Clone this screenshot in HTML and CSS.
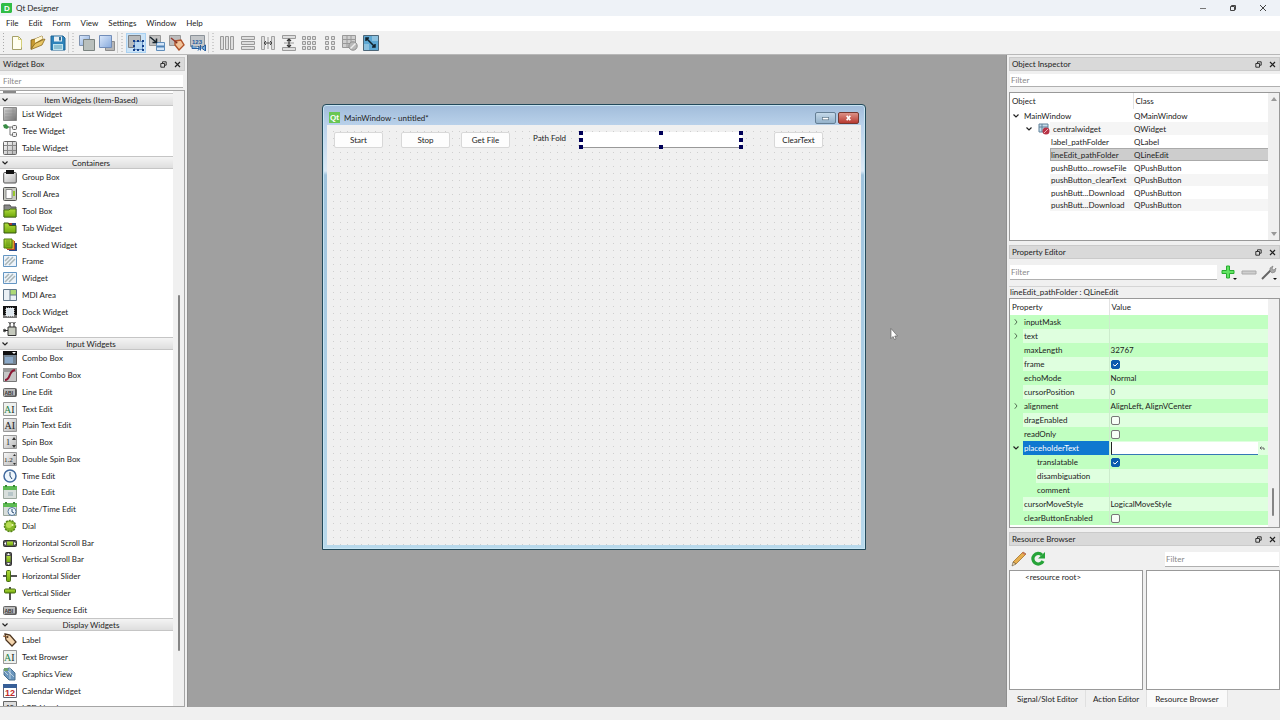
FILE: index.html
```html
<!DOCTYPE html>
<html lang="en">
<head>
<meta charset="utf-8">
<title>Qt Designer</title>
<link rel="stylesheet" href="styles.css">
</head>
<body>
<svg class="paints" aria-hidden="true">
  <defs>
    <linearGradient id="grey" x1="0" y1="0" x2="1" y2="1"><stop offset="0" stop-color="#fafafa"/><stop offset="1" stop-color="#b4b4b4"/></linearGradient>
    <linearGradient id="darkgrey" x1="0" y1="0" x2="1" y2="1"><stop offset="0" stop-color="#d8d8d8"/><stop offset="1" stop-color="#707070"/></linearGradient>
    <linearGradient id="blue" x1="0" y1="0" x2="1" y2="1"><stop offset="0" stop-color="#dce9fb"/><stop offset="1" stop-color="#86a9dc"/></linearGradient>
    <linearGradient id="lime" x1="0" y1="0" x2="0" y2="1"><stop offset="0" stop-color="#b2dc3c"/><stop offset="1" stop-color="#6fa80c"/></linearGradient>
  </defs>
</svg>
<svg class="sprite" aria-hidden="true">
  <symbol id="i-float" viewBox="0 0 7 7"><path d="M2.500 2V.8h3.700v3.400H5M.8 2.500h3.700v3.700H.8z" fill="none" stroke="#222" stroke-width=".9"/></symbol>
  <symbol id="i-close" viewBox="0 0 7 7"><path d="M1 1l5 5M6 1L1 6" stroke="#222" stroke-width="1.200"/></symbol>
  <symbol id="i-down" viewBox="0 0 8 8"><path d="M1.500 2.500L4 5l2.500-2.500" fill="none" stroke="#222" stroke-width="1.200"/></symbol>
  <symbol id="i-right" viewBox="0 0 8 8"><path d="M2.800 1.300L5 4 2.800 6.700" fill="none" stroke="#557055"/></symbol>

  <symbol id="i-new" viewBox="0 0 16 16"><path d="M3.500 1.500h6l3 3v10h-9z" fill="#fffef0" stroke="#a5a06a"/><path d="M9.500 1.500v3h3v8" fill="none" stroke="#d4cf78"/></symbol>
  <symbol id="i-open" viewBox="0 0 16 16"><path d="M1 14V5l4-1 7-3 1 3-8 5z" fill="#c79a31" stroke="#7a5b12" stroke-width=".8"/><path d="M5 4l7-3 .8 2.500L5 8z" fill="#fff6cf"/><path d="M1 14.500l4-6L15 4l-3 6z" fill="#e8c565" stroke="#8b6a1b" stroke-width=".8"/></symbol>
  <symbol id="i-save" viewBox="0 0 16 16"><path d="M1 1h12l2 2v12H1z" fill="#2e83ba" stroke="#1f6595"/><path d="M4 1.500h8v5H4z" fill="#e7eef2"/><path d="M9 2h2v3.500H9z" fill="#2e6c95"/><path d="M3 9h10v6H3z" fill="#bfe3ee"/><path d="M4 11h8M4 13h8" stroke="#5b9db8"/></symbol>
  <symbol id="i-lower" viewBox="0 0 16 16"><path d="M.5.500h10v10H.5z" fill="url(#blue)" stroke="#7f93b0"/><path d="M4.500 4.500h11v11h-11z" fill="#b9bfbc" stroke="#7b8380"/></symbol>
  <symbol id="i-raise" viewBox="0 0 16 16"><path d="M6.500 6.500h9v9h-9z" fill="#b5b5b5" stroke="#8c8c8c"/><path d="M.5.500h12v12H.5z" fill="url(#blue)" stroke="#718db9"/></symbol>
  <symbol id="i-editw" viewBox="0 0 16 16"><path d="M.5.500h12v12H.5z" fill="#b8babb" stroke="#7d8185"/><path d="M6.500 6.500h8v8h-8z" fill="#b6d6f2" stroke="#6c94c4"/><path d="M5 5h2v2H5zm4 0h2v2H9zm5 0h2v2h-2zM5 10h2v2H5zm9 0h2v2h-2zM5 14h2v2H5zm4 0h2v2H9zm5 0h2v2h-2z" fill="#143f8b"/></symbol>
  <symbol id="i-signals" viewBox="0 0 16 16"><path d="M.5.500h11v10H.5z" fill="#c1c1c1" stroke="#989898"/><path d="M7.500 7.500h8v8h-8z" fill="#d3e5f8" stroke="#5f8dbb"/><path d="M8 11.500h7" stroke="#4d80b5" stroke-width="2"/><path d="M1 2l6 5M7.500 3.500v4h-4" stroke="#18252e" stroke-width="1.500" fill="none"/></symbol>
  <symbol id="i-buddy" viewBox="0 0 16 16"><path d="M.5.500h11v10H.5z" fill="#bdbdbd" stroke="#999"/><path d="M6 6l6-1 3 5-5 5-4-5z" fill="#f1c39a" stroke="#b0532a" stroke-width="1.400"/><path d="M2 3l5 4" stroke="#94382c" stroke-width="1.500"/><circle cx="7.500" cy="7.500" r="1" fill="#7b2e1f"/></symbol>
  <symbol id="i-taborder" viewBox="0 0 16 16"><path d="M.5.500h14v11H.5z" fill="#c3c6c9" stroke="#8b9299"/><text x="2" y="9" font-size="6" class="glyph blue-glyph">123</text><path d="M2 10v3.500h7M8 11l2 2.500-2 2M10.500 10v5.500M15.500 10l-4 3 4 3z" fill="#77abd7" stroke="#245c9e"/></symbol>
  <symbol id="i-hlay" viewBox="0 0 16 16"><path d="M1.500 1.500v13h3v-13zM6.500 1.500v13h3v-13zM11.500 1.500v13h3v-13z" fill="#dedede" stroke="#9a9a9a"/></symbol>
  <symbol id="i-vlay" viewBox="0 0 16 16"><path d="M1.500 1.500h13v3h-13zM1.500 6.500h13v3h-13zM1.500 11.500h13v3h-13z" fill="#dedede" stroke="#9a9a9a"/></symbol>
  <symbol id="i-hsplit" viewBox="0 0 16 16"><path d="M1.500 1.500v13h3v-13zM11.500 1.500v13h3v-13z" fill="#dedede" stroke="#a2a2a2"/><path d="M8 2v12" stroke="#999"/><path d="M4 8h8M6 6L4 8l2 2M10 6l2 2-2 2" fill="none" stroke="#444"/></symbol>
  <symbol id="i-vsplit" viewBox="0 0 16 16"><path d="M1.500 .5h13v3h-13zM1.500 12.500h13v3h-13z" fill="#dedede" stroke="#9a9a9a"/><path d="M3 8h10" stroke="#999"/><path d="M8 4v8M6 6l2-2 2 2M6 10l2 2 2-2" fill="none" stroke="#333" stroke-width="1.200"/></symbol>
  <symbol id="i-grid" viewBox="0 0 16 16"><path d="M1.500 1.500h3v3h-3zM6.500 1.500h3v3h-3zM11.500 1.500h3v3h-3zM1.500 6.500h3v3h-3zM6.500 6.500h3v3h-3zM11.500 6.500h3v3h-3zM1.500 11.500h3v3h-3zM6.500 11.500h3v3h-3zM11.500 11.500h3v3h-3z" fill="#dedede" stroke="#9a9a9a"/></symbol>
  <symbol id="i-formlay" viewBox="0 0 16 16"><path d="M3.500 1.500h3v3h-3zM9.500 1.500h3v3h-3zM3.500 6.500h3v3h-3zM9.500 6.500h3v3h-3zM3.500 11.500h3v3h-3zM9.500 11.500h3v3h-3z" fill="#dedede" stroke="#9a9a9a"/></symbol>
  <symbol id="i-break" viewBox="0 0 16 16"><path d="M.5.500h13v4H.5zM.5 4.500h13v4H.5zM.5 8.500h13v4H.5zM5 .5v12M9 .5v12" fill="#cfcfcf" stroke="#999"/><circle cx="11" cy="11" r="4.200" fill="#b9b9b9" stroke="#8d8d8d"/><path d="M8.500 13.500l5-5" stroke="#eee" stroke-width="1.400"/></symbol>
  <symbol id="i-adjust" viewBox="0 0 16 16"><path d="M.5.500h15v15H.5z" fill="#5da7d2" stroke="#4c6678"/><path d="M9 1h6v5H9zM1 9h5v6H1z" fill="#8cc1df"/><path d="M3 3l9 9M3 6V3h3M12 9v3H9" stroke="#12222d" stroke-width="1.500" fill="none"/></symbol>

  <symbol id="w-list" viewBox="0 0 14 14"><path d="M.5.500h13v13H.5z" fill="url(#darkgrey)" stroke="#888"/><path d="M2 4h10M2 7h10M2 10h10M10 1v12" stroke="#8a8a8a" stroke-width=".5"/></symbol>
  <symbol id="w-tree" viewBox="0 0 14 14"><path d="M4 3h5M7 3v8h3" stroke="#777" fill="none"/><path d="M0 1l3-1 3 3-2 2-3-1z" fill="#398c45"/><rect x="9.500" y="1.500" width="4" height="4" rx="1" fill="#eee" stroke="#666"/><rect x="9.500" y="8.500" width="4" height="4" rx="1" fill="#eee" stroke="#666"/></symbol>
  <symbol id="w-table" viewBox="0 0 14 14"><rect x=".5" y=".5" width="13" height="13" rx="1" fill="url(#grey)" stroke="#666"/><path d="M4.500 1v12M9.500 1v12M1 4.500h12M1 9.500h12" stroke="#888"/></symbol>
  <symbol id="w-group" viewBox="0 0 14 14"><rect x=".7" y="2.500" width="12.600" height="10.500" rx="1" fill="url(#grey)" stroke="#555"/><path d="M3 0h8v4H3z" fill="#111"/></symbol>
  <symbol id="w-scroll" viewBox="0 0 14 14"><rect x=".5" y=".5" width="13" height="13" rx="1" fill="#c8cac2" stroke="#555"/><path d="M3 2.500h6v9H3z" fill="#fff" stroke="#888"/><path d="M11 4v5" stroke="#98c72f" stroke-width="2"/></symbol>
  <symbol id="w-tool" viewBox="0 0 14 14"><path d="M1 1h6l1 2h5v10H1z" fill="#888" stroke="#555"/><path d="M1 6h5l1-1h6v8H1z" fill="url(#lime)" stroke="#4d7812"/></symbol>
  <symbol id="w-tab" viewBox="0 0 14 14"><path d="M5 2h4v4H5z" fill="#aa382c"/><path d="M9 2h4v4H9z" fill="#294a8a"/><path d="M1 2h4.500l1 2.500H13V12H1z" fill="url(#lime)" stroke="#355610"/></symbol>
  <symbol id="w-stack" viewBox="0 0 14 14"><path d="M6 5h8v8H6z" fill="#25498c"/><path d="M4 3h8v9H4z" fill="#b2422d"/><path d="M3 2h8v9H3z" fill="#d6a52b"/><path d="M1 1h8v9H1z" fill="url(#lime)" stroke="#4e7812"/><path d="M3 3h4M3 5h4M3 7h4" stroke="#557a1c" stroke-width=".6"/></symbol>
  <symbol id="w-frame" viewBox="0 0 14 14"><path d="M.5 1.500h13v11H.5z" fill="#edf3fa" stroke="#6496c3"/><path d="M2 11l8-8M6 11l6-6M2 7l4-4" stroke="#a8b5b6" stroke-width="1.500"/></symbol>
  <symbol id="w-mdi" viewBox="0 0 14 14"><path d="M.5 1.500h13v11H.5z" fill="#eaf0f5" stroke="#61768a"/><path d="M7 2h6v5H7z" fill="#add977"/><path d="M7 2v10M7 7h6" stroke="#61768a"/></symbol>
  <symbol id="w-dock" viewBox="0 0 14 14"><path d="M0 1h14v12H0z" fill="#111"/><path d="M0 10h14v3H0z" fill="#777"/><path d="M3 3h8v8H3z" fill="#dfe8ef" stroke="#fff" stroke-dasharray="1 1"/></symbol>
  <symbol id="w-qax" viewBox="0 0 14 14"><path d="M5 5h8v8.500H5z" fill="#c5c9bd" stroke="#333"/><path d="M1 8.500h4M7 5V1M11 5V1" stroke="#222"/><circle cx="1.500" cy="8.500" r="1.200" fill="none" stroke="#222"/><path d="M5.500 0l1.500 1.500L8.500 0M9.500 0L11 1.500 12.500 0" stroke="#222" fill="none"/></symbol>
  <symbol id="w-combo" viewBox="0 0 14 14"><path d="M.5.500h13v13H.5z" fill="#748594" stroke="#555"/><path d="M0 0h14v4H0z" fill="#111"/><path d="M9 1h4l-2 2z" fill="#fff"/><path d="M2 6h8v6H2z" fill="#8ba9c8"/></symbol>
  <symbol id="w-font" viewBox="0 0 14 14"><path d="M.5.500h13v13H.5z" fill="#c6c6c6" stroke="#777"/><path d="M0 0h14v4H0z" fill="#999"/><path d="M2 12c6 0 3-9 10-10" stroke="#8c1734" stroke-width="2" fill="none"/></symbol>
  <symbol id="w-line" viewBox="0 0 14 14"><rect x=".5" y="3.500" width="13" height="8" rx="1" fill="#bbb" stroke="#666"/><path d="M12.500 4v7M2 11h11" stroke="#555"/><text x="1.500" y="9.500" font-size="5" class="glyph">ABI</text></symbol>
  <symbol id="w-text" viewBox="0 0 14 14"><path d="M.5.500h13v13H.5z" fill="#eef1ee" stroke="#999"/><text x="1" y="11" font-size="10" class="serif"><tspan class="green-glyph">A</tspan>I</text></symbol>
  <symbol id="w-plain" viewBox="0 0 14 14"><path d="M.5.500h13v13H.5z" fill="url(#grey)" stroke="#999"/><text x="1.500" y="11" font-size="10" class="serif">AI</text></symbol>
  <symbol id="w-spin" viewBox="0 0 14 14"><path d="M.5.500h13v13H.5z" fill="url(#grey)" stroke="#999"/><text x="3" y="10" font-size="8" class="serif">1</text><path d="M9 5h4l-2-3zM9 10h4l-2 3z" fill="#333"/></symbol>
  <symbol id="w-dspin" viewBox="0 0 14 14"><path d="M.5.500h13v13H.5z" fill="url(#grey)" stroke="#999"/><text x="1" y="10" font-size="7" class="serif">1.2</text><path d="M10 4h3l-1.500-2zM10 11h3l-1.500 2z" fill="#333"/></symbol>
  <symbol id="w-time" viewBox="0 0 14 14"><circle cx="7" cy="7" r="6" fill="#edf5fc" stroke="#40699e" stroke-width="1.500"/><path d="M7 3v4l2 3" fill="none" stroke="#28496f"/></symbol>
  <symbol id="w-date" viewBox="0 0 14 14"><path d="M.5 1.500h13v12H.5z" fill="#d8dedb" stroke="#9aa69c"/><path d="M0 1h14v4H0z" fill="#5dbb52"/><path d="M3 0v2M11 0v2" stroke="#3b8a36" stroke-width="2"/><path d="M5 7h5v4H5z" fill="#b7c6c9"/></symbol>
  <symbol id="w-datetime" viewBox="0 0 14 14"><path d="M.5 1.500h13v12H.5z" fill="#d8dedb" stroke="#9aa69c"/><path d="M0 1h14v4H0z" fill="#5dbb52"/><path d="M3 0v2M11 0v2" stroke="#3b8a36" stroke-width="2"/><circle cx="9" cy="9.500" r="4" fill="#edf5fc" stroke="#55799f"/><path d="M9 7v3l2 1" stroke="#28496f" fill="none"/></symbol>
  <symbol id="w-dial" viewBox="0 0 14 14"><circle cx="7" cy="7" r="5.500" fill="#86b927" stroke="#56831a" stroke-width="1.500" stroke-dasharray="2 1"/><circle cx="6" cy="6" r="3" fill="#b8dd55"/><circle cx="9.500" cy="6" r="1" fill="#eef7b5"/></symbol>
  <symbol id="w-hsb" viewBox="0 0 14 14"><rect x=".5" y="4.500" width="13" height="6" rx="1" fill="#555" stroke="#333"/><path d="M4 5.500h6v4H4z" fill="url(#lime)"/><path d="M3 6v3L1 7.500zM11 6v3l2-1.500z" fill="#fff"/></symbol>
  <symbol id="w-vsb" viewBox="0 0 14 14"><rect x="2.500" y=".5" width="6" height="13" rx="1" fill="#555" stroke="#333"/><path d="M3.500 4h4v6h-4z" fill="url(#lime)"/><path d="M4 3h3L5.500 1zM4 11h3l-1.500 2z" fill="#fff"/></symbol>
  <symbol id="w-hsl" viewBox="0 0 14 14"><path d="M0 7h14" stroke="#555" stroke-width="2"/><rect x="3.500" y="1.500" width="4" height="11" rx="1" fill="url(#lime)" stroke="#466a13"/></symbol>
  <symbol id="w-vsl" viewBox="0 0 14 14"><path d="M7 1v13" stroke="#555" stroke-width="2"/><rect x="1.500" y="3" width="11" height="4" rx="1" fill="url(#lime)" stroke="#466a13"/></symbol>
  <symbol id="w-label" viewBox="0 0 14 14"><path d="M2 1l5 1 6 7-4 4-6-6z" fill="#f4d5ad" stroke="#4b3420" stroke-width="1.300"/><circle cx="4.500" cy="4" r="1" fill="#4b3420"/><path d="M0 3l4 1" stroke="#8b5525"/></symbol>
  <symbol id="w-graph" viewBox="0 0 14 14"><path d="M1 2l6-1 5 5v7H6L1 8z" fill="#6a95bd" stroke="#49708f"/><path d="M1 4l4 4M3 2l8 8M7 1v11" stroke="#dbe9ed" stroke-width=".7"/><path d="M1 1h4v3H1z" fill="#70a06b"/></symbol>
  <symbol id="w-cal" viewBox="0 0 14 14"><path d="M.5.500h13v13H.5z" fill="#fff" stroke="#667"/><path d="M0 0h14v4H0z" fill="#375f98"/><text x="2" y="12" font-size="9" class="glyph red-glyph">12</text></symbol>
  <symbol id="w-lcd" viewBox="0 0 14 14"><path d="M.5.500h13v13H.5z" fill="#ddd" stroke="#666"/><text x="2" y="9" font-size="8" class="glyph">42</text></symbol>
</svg>

<header class="titlebar">
  <svg class="app-logo" viewBox="0 0 11 10"><path d="M1 0h10v9l-1 1H0V1z" fill="#31bd46"/><text x="3" y="8" font-size="8" class="glyph white-glyph">D</text></svg>
  <span class="app-title">Qt Designer</span>
  <div class="caption-buttons">
    <button aria-label="Minimize"><svg viewBox="0 0 8 8"><path d="M1 4.500h6" stroke="#777"/></svg></button>
    <button aria-label="Restore"><svg viewBox="0 0 8 8"><path d="M2.500 2.500v-1h4v4h-1M1.500 2.500h4v4h-4z" fill="none" stroke="#444"/></svg></button>
    <button aria-label="Close"><svg viewBox="0 0 8 8"><path d="M1 1l6 6M7 1L1 7" stroke="#444"/></svg></button>
  </div>
</header>
<nav class="menubar">
  <button>File</button><button>Edit</button><button>Form</button><button>View</button><button>Settings</button><button>Window</button><button>Help</button>
</nav>
<div class="toolbar" role="toolbar">
  <span class="grip grip-first"></span>
  <div class="tools tools-file">
    <button aria-label="New"><svg><use href="#i-new"/></svg></button>
    <button aria-label="Open"><svg><use href="#i-open"/></svg></button>
    <button aria-label="Save"><svg><use href="#i-save"/></svg></button>
  </div>
  <span class="grip"></span>
  <div class="tools tools-order">
    <button aria-label="Send to back"><svg><use href="#i-lower"/></svg></button>
    <button aria-label="Bring to front"><svg><use href="#i-raise"/></svg></button>
  </div>
  <span class="grip"></span>
  <div class="tools tools-mode">
    <button class="active" aria-label="Edit widgets"><svg><use href="#i-editw"/></svg></button>
    <button aria-label="Edit signals/slots"><svg><use href="#i-signals"/></svg></button>
    <button aria-label="Edit buddies"><svg><use href="#i-buddy"/></svg></button>
    <button aria-label="Edit tab order"><svg><use href="#i-taborder"/></svg></button>
  </div>
  <span class="grip"></span>
  <div class="tools tools-layout">
    <button aria-label="Lay out horizontally"><svg><use href="#i-hlay"/></svg></button>
    <button aria-label="Lay out vertically"><svg><use href="#i-vlay"/></svg></button>
    <button aria-label="Horizontal splitter"><svg><use href="#i-hsplit"/></svg></button>
    <button aria-label="Vertical splitter"><svg><use href="#i-vsplit"/></svg></button>
    <button aria-label="Grid layout"><svg><use href="#i-grid"/></svg></button>
    <button aria-label="Form layout"><svg><use href="#i-formlay"/></svg></button>
    <button aria-label="Break layout"><svg><use href="#i-break"/></svg></button>
    <button aria-label="Adjust size"><svg><use href="#i-adjust"/></svg></button>
  </div>
</div>

<main class="workspace">
  <aside class="left-dock">
    <div class="dock-title"><span>Widget Box</span><button aria-label="Float"><svg><use href="#i-float"/></svg></button><button aria-label="Close"><svg><use href="#i-close"/></svg></button></div>
    <input class="filter" type="text" placeholder="Filter" aria-label="Filter widgets">
    <div class="widget-view">
      <div class="widget-list">
        <div class="clipped-row"><i></i></div>
        <h2 class="category"><svg><use href="#i-down"/></svg><span>Item Widgets (Item-Based)</span></h2>
        <ul class="items items-views">
          <li><svg><use href="#w-list"/></svg>List Widget</li>
          <li><svg><use href="#w-tree"/></svg>Tree Widget</li>
          <li><svg><use href="#w-table"/></svg>Table Widget</li>
        </ul>
        <h2 class="category"><svg><use href="#i-down"/></svg><span>Containers</span></h2>
        <ul class="items items-containers">
          <li><svg><use href="#w-group"/></svg>Group Box</li>
          <li><svg><use href="#w-scroll"/></svg>Scroll Area</li>
          <li><svg><use href="#w-tool"/></svg>Tool Box</li>
          <li><svg><use href="#w-tab"/></svg>Tab Widget</li>
          <li><svg><use href="#w-stack"/></svg>Stacked Widget</li>
          <li><svg><use href="#w-frame"/></svg>Frame</li>
          <li><svg><use href="#w-frame"/></svg>Widget</li>
          <li><svg><use href="#w-mdi"/></svg>MDI Area</li>
          <li><svg><use href="#w-dock"/></svg>Dock Widget</li>
          <li><svg><use href="#w-qax"/></svg>QAxWidget</li>
        </ul>
        <h2 class="category"><svg><use href="#i-down"/></svg><span>Input Widgets</span></h2>
        <ul class="items items-inputs">
          <li><svg><use href="#w-combo"/></svg>Combo Box</li>
          <li><svg><use href="#w-font"/></svg>Font Combo Box</li>
          <li><svg><use href="#w-line"/></svg>Line Edit</li>
          <li><svg><use href="#w-text"/></svg>Text Edit</li>
          <li><svg><use href="#w-plain"/></svg>Plain Text Edit</li>
          <li><svg><use href="#w-spin"/></svg>Spin Box</li>
          <li><svg><use href="#w-dspin"/></svg>Double Spin Box</li>
          <li><svg><use href="#w-time"/></svg>Time Edit</li>
          <li><svg><use href="#w-date"/></svg>Date Edit</li>
          <li><svg><use href="#w-datetime"/></svg>Date/Time Edit</li>
          <li><svg><use href="#w-dial"/></svg>Dial</li>
          <li><svg><use href="#w-hsb"/></svg>Horizontal Scroll Bar</li>
          <li><svg><use href="#w-vsb"/></svg>Vertical Scroll Bar</li>
          <li><svg><use href="#w-hsl"/></svg>Horizontal Slider</li>
          <li><svg><use href="#w-vsl"/></svg>Vertical Slider</li>
          <li><svg><use href="#w-line"/></svg>Key Sequence Edit</li>
        </ul>
        <h2 class="category"><svg><use href="#i-down"/></svg><span>Display Widgets</span></h2>
        <ul class="items">
          <li><svg><use href="#w-label"/></svg>Label</li>
          <li><svg><use href="#w-text"/></svg>Text Browser</li>
          <li><svg><use href="#w-graph"/></svg>Graphics View</li>
          <li><svg><use href="#w-cal"/></svg>Calendar Widget</li>
          <li><svg><use href="#w-lcd"/></svg>LCD Number</li>
        </ul>
      </div>
      <div class="scrollbar"><span class="thumb thumb-widgets"></span></div>
    </div>
  </aside>

  <section class="mdi">
    <div class="form-window">
      <div class="form-title">
        <svg class="qt-logo" viewBox="0 0 11 11"><path d="M0 0h11v11H0z" fill="#69c653"/><text x="1" y="8" font-size="8" class="glyph white-glyph">Qt</text></svg>
        <span>MainWindow - untitled*</span>
        <button class="win-min" aria-label="Minimize form"><svg viewBox="0 0 20 11"><rect x="6.500" y="5" width="7" height="2.500" fill="#fff" stroke="#5a7183" stroke-width=".7"/></svg></button>
        <button class="win-close" aria-label="Close form"><svg viewBox="0 0 20 11"><path d="M8 3l4 5M12 3L8 8" stroke="#fff" stroke-width="1.800"/></svg></button>
      </div>
      <div class="canvas">
        <button class="push start">Start</button>
        <button class="push stop">Stop</button>
        <button class="push getfile">Get File</button>
        <label class="path-label" for="path">Path Fold</label>
        <div class="selected-edit">
          <input id="path" type="text">
          <i class="h nw"></i><i class="h n"></i><i class="h ne"></i><i class="h w"></i><i class="h e"></i><i class="h sw"></i><i class="h s"></i><i class="h se"></i>
        </div>
        <button class="push clear">ClearText</button>
      </div>
    </div>
    <svg class="pointer" viewBox="0 0 8 12"><path d="M1 .5v10l2-2 1.500 3 1.500-.7L4.700 8H7.500z" fill="#fff" stroke="#555" stroke-width=".6"/></svg>
  </section>

  <aside class="right-dock">
    <section class="dock inspector">
      <div class="dock-title"><span>Object Inspector</span><button aria-label="Float"><svg><use href="#i-float"/></svg></button><button aria-label="Close"><svg><use href="#i-close"/></svg></button></div>
      <input class="filter" type="text" placeholder="Filter" aria-label="Filter objects">
      <div class="view">
        <table class="objects">
          <thead><tr><th>Object</th><th>Class</th></tr></thead>
          <tbody>
            <tr><td class="root"><span><svg><use href="#i-down"/></svg>MainWindow</span></td><td>QMainWindow</td></tr>
            <tr class="alt"><td class="child"><span><svg><use href="#i-down"/></svg><svg class="central" viewBox="0 0 12 12"><path d="M1 1h9v8H1zM1 4h9M4 1v8" fill="#c6dcea" stroke="#60819a"/><circle cx="8" cy="8" r="3.500" fill="#b83346"/><path d="M6 10l4-4" stroke="#efb6bd"/></svg>centralwidget</span></td><td>QWidget</td></tr>
            <tr><td class="leaf"><span>label_pathFolder</span></td><td>QLabel</td></tr>
            <tr class="selected"><td class="leaf"><span>lineEdit_pathFolder</span></td><td>QLineEdit</td></tr>
            <tr><td class="leaf"><span>pushButto...rowseFile</span></td><td>QPushButton</td></tr>
            <tr class="alt short"><td class="leaf"><span>pushButton_clearText</span></td><td>QPushButton</td></tr>
            <tr><td class="leaf"><span>pushButt...Download</span></td><td>QPushButton</td></tr>
            <tr class="alt short"><td class="leaf"><span>pushButt...Download</span></td><td>QPushButton</td></tr>
          </tbody>
        </table>
        <div class="scrollbar arrows"><svg viewBox="0 0 8 6"><path d="M1 5h6L4 1z" fill="#999"/></svg><svg viewBox="0 0 8 6"><path d="M1 1h6L4 5z" fill="#999"/></svg></div>
      </div>
    </section>

    <section class="dock properties">
      <div class="dock-title"><span>Property Editor</span><button aria-label="Float"><svg><use href="#i-float"/></svg></button><button aria-label="Close"><svg><use href="#i-close"/></svg></button></div>
      <div class="property-tools">
        <input class="filter" type="text" placeholder="Filter" aria-label="Filter properties">
        <button aria-label="Add property"><svg viewBox="0 0 16 16"><path d="M5.500 1h3v4.500H13v3H8.500V13h-3V8.500H1v-3h4.500z" fill="#62e362" stroke="#26ad2f"/><path d="M12 13h4l-2 2z" fill="#111"/></svg></button>
        <button aria-label="Remove property"><svg viewBox="0 0 16 16"><path d="M1 6h14v3H1z" fill="#cfcfcf" stroke="#aaa"/></svg></button>
        <button aria-label="Configure"><svg viewBox="0 0 16 16"><path d="M1 14L10 5" stroke="#666" stroke-width="2"/><path d="M9 6V3l3-2-1 3 2 1 2-2-1 4-3 1z" fill="#aaa" stroke="#777" stroke-width=".6"/><path d="M12 13h4l-2 2z" fill="#111"/></svg></button>
      </div>
      <div class="object-name">lineEdit_pathFolder : QLineEdit</div>
      <div class="view">
        <table class="props">
          <thead><tr><th>Property</th><th>Value</th></tr></thead>
          <tbody>
            <tr><th><span><svg><use href="#i-right"/></svg>inputMask</span></th><td></td></tr>
            <tr><th><span><svg><use href="#i-right"/></svg>text</span></th><td></td></tr>
            <tr><th>maxLength</th><td>32767</td></tr>
            <tr><th><label for="p-frame">frame</label></th><td><input id="p-frame" type="checkbox" checked></td></tr>
            <tr><th>echoMode</th><td>Normal</td></tr>
            <tr><th>cursorPosition</th><td>0</td></tr>
            <tr><th><span><svg><use href="#i-right"/></svg>alignment</span></th><td>AlignLeft, AlignVCenter</td></tr>
            <tr><th><label for="p-drag">dragEnabled</label></th><td><input id="p-drag" type="checkbox"></td></tr>
            <tr><th><label for="p-ro">readOnly</label></th><td><input id="p-ro" type="checkbox"></td></tr>
            <tr class="current"><th><span><svg><use href="#i-down"/></svg><label for="p-ph">placeholderText</label></span></th><td><div class="editor"><input id="p-ph" type="text"><button aria-label="Reset"><svg viewBox="0 0 8 8"><path d="M6 6V4H2M3.500 2.500L2 4l1.500 1.500" fill="none" stroke="#666"/></svg></button></div></td></tr>
            <tr class="nested"><th><label for="p-tr">translatable</label></th><td><input id="p-tr" type="checkbox" checked></td></tr>
            <tr class="nested"><th>disambiguation</th><td></td></tr>
            <tr class="nested"><th>comment</th><td></td></tr>
            <tr><th>cursorMoveStyle</th><td>LogicalMoveStyle</td></tr>
            <tr><th><label for="p-cb">clearButtonEnabled</label></th><td><input id="p-cb" type="checkbox"></td></tr>
          </tbody>
        </table>
        <div class="scrollbar"><span class="thumb thumb-props"></span></div>
      </div>
    </section>

    <section class="dock resources">
      <div class="dock-title"><span>Resource Browser</span><button aria-label="Float"><svg><use href="#i-float"/></svg></button><button aria-label="Close"><svg><use href="#i-close"/></svg></button></div>
      <div class="resource-tools">
        <button aria-label="Edit resources"><svg viewBox="0 0 16 16"><path d="M2 11L12 1l3 2L5 13z" fill="#e6ae4e" stroke="#98651f" stroke-width=".7"/><path d="M2 11l3 2-4 2z" fill="#eed7a8" stroke="#4c3e29" stroke-width=".5"/><path d="M12 1l3 2-1 1-3-2z" fill="#c66f5f"/></svg></button>
        <button aria-label="Reload"><svg viewBox="0 0 16 16"><path d="M13 10a5.300 5.300 0 1 1-1-6" fill="none" stroke="#26a338" stroke-width="3.200"/><path d="M8 7.500h7V1z" fill="#26a338"/></svg></button>
        <input class="filter" type="text" placeholder="Filter" aria-label="Filter resources">
      </div>
      <div class="resource-panes"><div class="pane">&lt;resource root&gt;</div><div class="pane"></div></div>
      <div class="tabs" role="tablist"><button role="tab">Signal/Slot Editor</button><button role="tab">Action Editor</button><button role="tab" class="active" aria-selected="true">Resource Browser</button></div>
    </section>
  </aside>
</main>
<footer class="statusbar"></footer>
</body>
</html>
```

FILE: styles.css
```css
* { box-sizing: border-box; }
body {
  margin: 0;
  height: 100vh;
  display: flex;
  flex-direction: column;
  overflow: hidden;
  background: #f0f0f0;
  color: #222;
  font: 8px/12px Lato, "Open Sans", sans-serif;
}
button, input { font: inherit; color: inherit; margin: 0; padding: 0; border: 0; background: none; border-radius: 0; }
input { min-width: 0; outline: 0; }
svg { display: block; flex: none; }
.paints { position: absolute; width: 0; height: 0; }
.sprite { display: none; }
.glyph { font-family: "Liberation Sans", sans-serif; font-weight: bold; fill: #333; }
.serif { font-family: "Liberation Serif", serif; fill: #222; }
.white-glyph { fill: #fff; }
.blue-glyph { fill: #245c9e; }
.green-glyph { fill: #27824a; }
.red-glyph { fill: #c22a2a; }

.titlebar { height: 16px; flex: none; display: flex; align-items: center; background: #eef2f7; }
.app-logo { width: 11px; height: 10px; margin: 0 4px 0 1px; }
.app-title { flex: 1; }
.caption-buttons { display: flex; padding-right: 2px; }
.caption-buttons button { width: 30px; height: 15px; display: grid; place-items: center; }
.caption-buttons svg { width: 8px; height: 8px; }

.menubar { height: 15px; flex: none; display: flex; align-items: center; gap: 10px; padding: 0 0 1px 6px; background: #fff; }

.toolbar { height: 24px; flex: none; display: flex; align-items: center; border-bottom: 1px solid #b8b8b8; background: #f1f1f1; }
.tools { display: flex; justify-content: space-between; }
.tools-file { width: 61px; }
.tools-order { width: 40px; }
.tools-mode { width: 82px; }
.tools-layout { width: 164px; }
.tools button { width: 20px; height: 20px; display: grid; place-items: center; }
.tools svg { width: 16px; height: 16px; }
.tools .active { background: #cce4f7; box-shadow: inset 0 0 0 1px #a9d1f2; }
.grip { width: 9px; height: 21px; border-left: 1px solid #d0d0d0; background: radial-gradient(circle, #aaa 1px, transparent 1px) center / 3px 3px; background-clip: content-box; padding: 0 2px 0 3px; }
.grip-first { width: 7px; border-left: 0; }

.workspace { flex: 1; min-height: 0; display: flex; }
.statusbar { height: 13px; flex: none; }

.left-dock { width: 188px; flex: none; display: flex; flex-direction: column; padding: 2px 2px 0 0; border-right: 1px solid #8f8f8f; }
.dock-title { height: 14px; flex: none; display: flex; align-items: center; padding: 0 3px; background: #d9d9d9; border: 1px solid #cacaca; border-left: 0; }
.right-dock .dock-title { border-left: 1px solid #cacaca; padding-left: 2px; }
.dock-title span { flex: 1; }
.dock-title button { margin-left: 7px; }
.dock-title svg { width: 7px; height: 7px; }
.filter { height: 13px; background: #fff; border-bottom: 1px solid #b0b0b0; }
.filter::placeholder { color: #888; opacity: 1; }
.left-dock .filter { margin: 4px 2px 2px 0; padding-left: 3px; }
.widget-view { flex: 1; min-height: 0; display: flex; background: #fff; border: 1px solid #a5a5a5; border-width: 1px 1px 1px 0; }
.widget-list { flex: 1; overflow: hidden; }
.clipped-row { height: 2px; padding-left: 3px; }
.clipped-row i { display: block; width: 13px; height: 2px; background: #888; }
.category { height: 13px; margin: 0; display: flex; align-items: center; font: inherit; background: linear-gradient(#f4f4f4, #dedede); border: 1px solid #c5c5c5; border-width: 1px 0; }
.category svg { width: 8px; height: 8px; margin-left: 1px; }
.category span { flex: 1; text-align: center; }
.items { list-style: none; margin: 0; padding: 0 0 0 3px; display: grid; grid-auto-rows: 17px; }
.items li { display: flex; align-items: center; gap: 5px; }
.items svg { width: 14px; height: 14px; }
.items-views, .items-containers, .items-inputs { grid-auto-rows: 1fr; }
.items-views { height: 50px; }
.items-containers { height: 168px; }
.items-inputs { height: 268px; }
.items-views li, .items-containers li, .items-inputs li { min-height: 0; }
.scrollbar { width: 11px; flex: none; position: relative; background: #f0f0f0; }
.thumb { position: absolute; left: 5px; width: 2px; border-radius: 1px; background: #858585; }
.thumb-widgets { top: 204px; height: 356px; }
.thumb-props { top: 189px; height: 28px; left: 4px; }

.mdi { flex: 1; min-width: 0; position: relative; overflow: hidden; background: #a0a0a0; }
.form-window { position: absolute; left: 134px; top: 49px; width: 544px; height: 446px; padding: 1px 4px 4px; display: flex; flex-direction: column; background: linear-gradient(#a1bcda, #b9d1ea 20px, #dceaf6 66px, #9fc3dd 70px, #b8d9ec); border: 1px solid #23495a; border-radius: 4px 4px 0 0; box-shadow: inset 0 0 0 1px #c7e4f2; }
.form-title { height: 19px; flex: none; display: flex; align-items: center; padding: 4px 2px 0 2px; }
.form-title span { flex: 1; margin-left: 4px; }
.qt-logo { width: 11px; height: 11px; }
.form-title button { width: 21px; height: 12px; margin-left: 2px; border: 1px solid #657f95; border-radius: 2px; background: linear-gradient(#c5d9e9, #94b2cb); }
.form-title .win-close { border-color: #74372f; background: linear-gradient(#dc9186, #b83a31); }
.form-title button svg { width: 100%; height: 100%; }
/* Snap grid: one dot in every 7px cell */
.canvas { flex: 1; position: relative; background: linear-gradient(90deg, #f0f0f0 6px, transparent 6px) 0 0 / 7px 7px, linear-gradient(#f0f0f0 6px, #cfcfcf 6px) 0 0 / 7px 7px; }
.push { position: absolute; top: 7px; width: 49px; height: 16px; background: #fdfdfd; border: 1px solid #d8d8d8; border-radius: 2px; }
.start { left: 7px; }
.stop { left: 74px; }
.getfile { left: 134px; }
.clear { left: 447px; }
.path-label { position: absolute; left: 206px; top: 7px; }
.selected-edit { position: absolute; left: 253px; top: 7px; width: 162px; height: 16px; }
.selected-edit input { width: 100%; height: 100%; background: #fff; border-bottom: 1px solid #999; }
.h { position: absolute; width: 4px; height: 4px; background: #000058; }
.nw, .w, .sw { left: -1px; }
.n, .s { left: 79px; }
.ne, .e, .se { right: -1px; }
.nw, .n, .ne { top: -1px; }
.w, .e { top: 6px; }
.sw, .s, .se { bottom: -1px; }
.pointer { position: absolute; left: 702px; top: 273px; width: 8px; height: 12px; }

.right-dock { width: 274px; flex: none; display: flex; flex-direction: column; gap: 4px; padding: 2px 0 0 2px; border-left: 1px solid #8f8f8f; }
.dock { display: flex; flex-direction: column; }
.inspector { height: 184px; }
.inspector .filter { margin: 3px 0 5px 1px; padding-left: 1px; }
.properties { height: 283px; }
.resources { flex: 1; min-height: 0; }
.view { flex: 1; min-height: 0; display: flex; background: #fff; border: 1px solid #999; }
table { border-collapse: collapse; table-layout: fixed; width: 100%; height: 0; flex: 1; }
.view > table { align-self: flex-start; }
th, td { padding: 0; font-weight: normal; text-align: left; white-space: nowrap; }
thead th { height: 16px; padding-left: 2px; }
thead th + th { border-left: 1px solid #e3e3e3; padding-left: 2px; }
td span, th span { display: flex; align-items: center; }
td span svg, th span svg { width: 8px; height: 8px; }
.objects th:first-child { width: 123px; }
.objects tbody td { height: 13px; padding-left: 1px; }
.objects .short td { height: 12px; }
.objects .root { padding-left: 2px; }
.root svg { margin-right: 4px; }
.objects .child { padding-left: 15px; }
.child svg { margin-right: 5px; }
.child .central { width: 12px; height: 12px; margin-right: 3px; }
.objects .leaf { padding-left: 41px; }
.alt { background: linear-gradient(90deg, transparent 40px, #f5f5f5 40px); }
.selected { background: linear-gradient(90deg, transparent 40px, #cdcdcd 40px); }
.selected td { box-shadow: inset 0 1px #aaa, inset 0 -1px #aaa; }
.objects .selected .leaf { padding-left: 40px; box-shadow: none; }
.selected .leaf span { padding-left: 1px; height: 13px; box-shadow: inset 0 1px #aaa, inset 0 -1px #aaa, inset 1px 0 #aaa; }
.arrows { display: flex; flex-direction: column; justify-content: space-between; align-items: center; padding: 3px 0; }
.arrows svg { width: 8px; height: 6px; }

.property-tools { display: flex; align-items: center; height: 27px; flex: none; padding: 0 3px 0 1px; gap: 4px; }
.property-tools .filter { flex: 1; height: 15px; padding-left: 1px; }
.property-tools button, .property-tools svg { width: 16px; height: 16px; }
.object-name { height: 12px; flex: none; padding-left: 1px; border-top: 1px solid #d5d5d5; line-height: 10px; }
.props thead th:first-child { width: 99px; }
.props tbody tr { background: #dfffdf; }
.props tbody tr:nth-child(odd) { background: #c1ffc1; }
.props tbody th { height: 14px; padding-left: 14px; border-left: 0; box-shadow: inset 13px 0 #c1ffc1; }
.props tbody td { height: 14px; padding-left: 1px; border-left: 1px solid #cdeccd; }
.props th span svg { margin: 0 4px 0 -12px; color: #222; }
.props .nested th { padding-left: 27px; box-shadow: inset 26px 0 #c1ffc1; }
.props .current th { color: #fff; background: #0f78d0; }
.props label { display: block; }
.props input[type="checkbox"] { appearance: none; display: block; width: 9px; height: 9px; border: 1px solid #777; border-radius: 2px; background: #f7fff7; }
.props input:checked { border-color: #0b5cad; background: #0b5cad url("data:image/svg+xml,%3Csvg xmlns='http://www.w3.org/2000/svg' viewBox='0 0 7 7'%3E%3Cpath d='M1 3.500l2 1.500 3-3' fill='none' stroke='white'/%3E%3C/svg%3E"); }
.props .current td { padding: 0; }
.editor { display: flex; height: 13px; }
.editor input { flex: 1; background: #fff; border-left: 1px solid #222; border-bottom: 1px solid #3578b5; margin-left: 1px; }
.editor button { width: 10px; }
.editor svg { width: 8px; height: 8px; }

.resource-tools { height: 24px; flex: none; display: flex; align-items: center; gap: 3px; padding: 2px 1px 0 2px; }
.resource-tools button, .resource-tools svg { width: 16px; height: 16px; }
.resource-tools .filter { width: 114px; height: 15px; margin-left: auto; padding-left: 1px; }
.resource-panes { flex: 1; display: grid; grid-template-columns: 1fr 1fr; gap: 3px; }
.pane { background: #fff; border: 1px solid #999; padding: 0 0 0 15px; }
.tabs { height: 17px; flex: none; display: flex; padding-left: 1px; }
.tabs button { padding: 0 7px; border-right: 1px solid #e0e0e0; }
.tabs .active { background: #fafafa; padding: 0 8px; }
```
